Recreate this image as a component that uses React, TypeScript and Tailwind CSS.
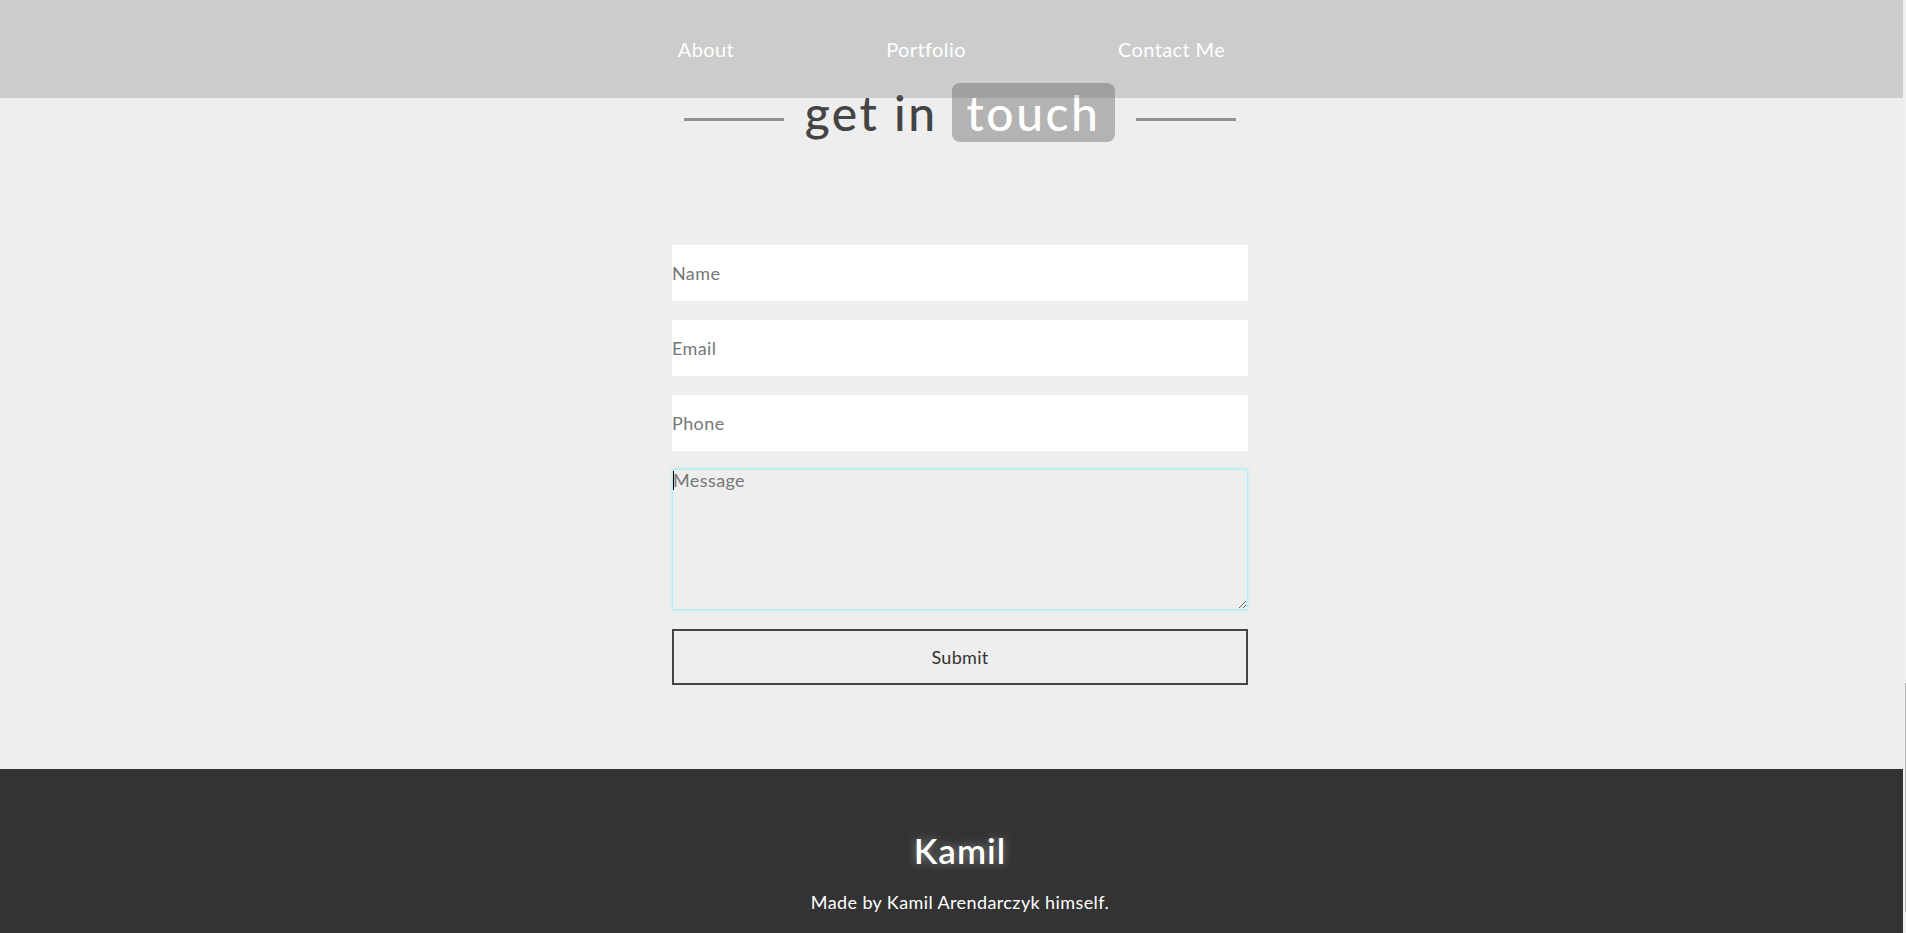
import React from 'react';

const navLinks = ['About', 'Portfolio', 'Contact Me'];

function Field({ placeholder }: { placeholder: string }) {
    return (
        <input
            type="text"
            placeholder={placeholder}
            className="h-[56px] w-full bg-white px-0 text-[18px] tracking-[0.4px] text-[#333] outline-none placeholder:text-[#777]"
        />
    );
}

export default function App() {
    return (
        <div className="flex h-[933px] w-full overflow-hidden bg-[#eeeeee] font-['Lato',sans-serif]">
            <div className="relative flex min-w-0 flex-1 flex-col">
                <nav className="absolute left-0 top-0 z-10 flex h-[98px] w-full items-center justify-center gap-[152px] bg-[rgba(104,104,104,0.25)]">
                    {navLinks.map((link) => (
                        <a key={link} href="#" className="text-[20px] leading-none tracking-[0.4px] text-white">
                            {link}
                        </a>
                    ))}
                </nav>

                <section className="pl-[17px] pt-[83px]">
                    <div className="flex h-[59px] items-center justify-center">
                        <span className="mt-[14px] h-[3px] w-[100px] bg-[#929292]" />
                        <h2 className="mx-[21px] flex items-center text-[48px] font-medium leading-none tracking-[2.5px] text-[#444]">
                            <span>get in</span>
                            <span className="ml-[14px] flex h-[59px] items-center rounded-lg bg-[#b3b3b3] px-[15px] text-white">touch</span>
                        </h2>
                        <span className="mt-[14px] h-[3px] w-[100px] bg-[#929292]" />
                    </div>

                    <form className="mx-auto mt-[103px] flex w-[576px] flex-col">
                        <Field placeholder="Name" />
                        <div className="mt-[19px]">
                            <Field placeholder="Email" />
                        </div>
                        <div className="mt-[19px]">
                            <Field placeholder="Phone" />
                        </div>
                        <div className="relative mt-[18px]">
                            <textarea
                                placeholder="Message"
                                className="block h-[141px] w-full resize border border-[#b5eef2] bg-transparent px-0 pt-0 text-[18px] leading-[20px] tracking-[0.4px] text-[#333] shadow-[0_0_3px_#a8ecf0] outline-none placeholder:text-[#777]"
                            />
                            <span className="absolute left-[1px] top-[2px] h-[19px] w-px bg-black" />
                        </div>
                        <button
                            type="button"
                            className="mt-[19px] h-[56px] w-full border-2 border-[#444] bg-transparent text-[18px] tracking-[0.3px] text-[#333]"
                        >
                            Submit
                        </button>
                    </form>
                </section>

                <footer className="mt-[84px] flex-1 bg-[#333333] pl-[17px] pt-[64px] text-center">
                    <h3 className="text-[35px] font-semibold leading-none tracking-[1px] text-white [text-shadow:0_0_10px_rgba(255,255,255,0.45)]">
                        Kamil
                    </h3>
                    <p className="mt-[25px] text-[18px] leading-none tracking-[0.4px] text-white">Made by Kamil Arendarczyk himself.</p>
                </footer>
            </div>

            {/* scrollbar strip */}
            <div className="w-[3px] shrink-0 bg-[#f1f1f1] pt-[683px]">
                <div className="ml-[2px] h-[229px] w-px bg-[#b4b4b4]" />
            </div>
        </div>
    );
}
